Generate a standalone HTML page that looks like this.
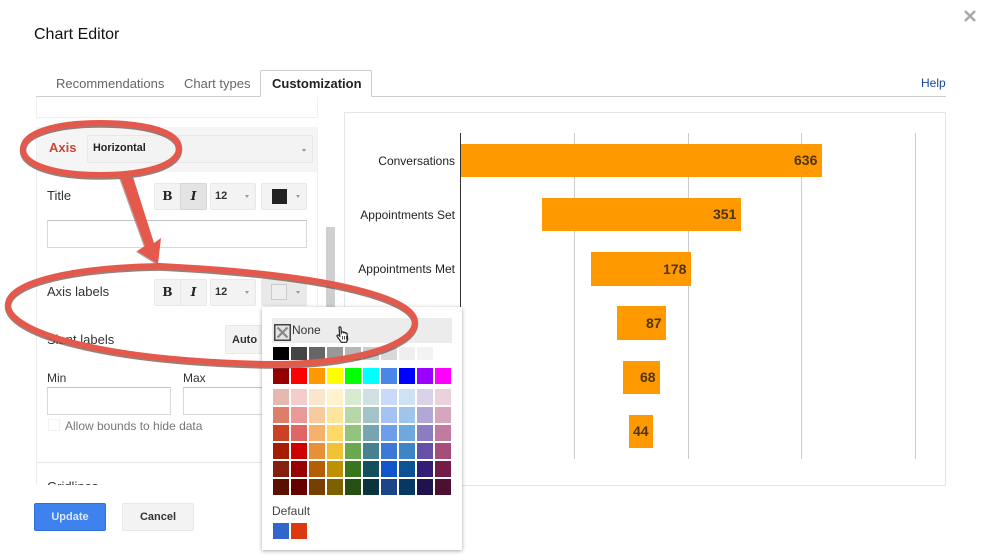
<!DOCTYPE html>
<html><head><meta charset="utf-8">
<style>
html,body{margin:0;padding:0;background:#fff}
body{width:987px;height:555px;position:relative;overflow:hidden;font-family:"Liberation Sans",sans-serif;color:#333;filter:blur(.35px)}
.a{position:absolute}
.t{position:absolute;white-space:nowrap;line-height:16px}
.btn{position:absolute;box-sizing:border-box;background:#f3f3f3;border:1px solid #e8e8e8;border-radius:2px;font-weight:bold;font-size:11px;color:#333;text-align:center}
.inp{position:absolute;box-sizing:border-box;background:#fff;border:1px solid #d8d8d8;border-top-color:#c4c4c4}
.caret{position:absolute;width:0;height:0;border-left:2.5px solid transparent;border-right:2.5px solid transparent;border-top:3px solid #999}
.bar{position:absolute;background:#ff9900}
.val{position:absolute;font-weight:bold;font-size:14px;color:#4e3410;line-height:16px;white-space:nowrap}
.gl{position:absolute;width:1px;top:133px;height:326px;background:#ccc}
.lb{position:absolute;right:532px;font-size:12px;color:#222;line-height:16px;white-space:nowrap}
.c{position:absolute;width:16px;height:16px}
.bi{font-family:"DejaVu Serif",serif;font-size:12px;line-height:25px;color:#222}
</style></head><body>

<div class="t" style="left:34px;top:26px;font-size:16px;color:#111;line-height:18px">Chart Editor</div>
<svg class="a" style="left:963px;top:9px" width="14" height="14"><path d="M2 2L12 12M12 2L2 12" stroke="#aaa" stroke-width="2.6"/></svg>

<!-- tabs -->
<div class="a" style="left:36px;top:96px;width:910px;height:1px;background:#ccc"></div>
<div class="t" style="left:56px;top:76px;font-size:13px;color:#666">Recommendations</div>
<div class="t" style="left:184px;top:76px;font-size:13px;color:#666">Chart types</div>
<div class="a" style="left:260px;top:70px;width:112px;height:27px;box-sizing:border-box;background:#fff;border:1px solid #ccc;border-bottom:1px solid #fff;border-radius:2px 2px 0 0"></div>
<div class="t" style="left:272px;top:76px;font-size:13px;font-weight:bold;color:#222">Customization</div>
<div class="t" style="left:921px;top:75px;font-size:12px;color:#15489c">Help</div>

<!-- left panel -->
<div class="a" style="left:36px;top:97px;width:282px;height:21px;border:1px solid #f0f0f0;border-top:0;box-sizing:border-box"></div>
<div class="a" style="left:36px;top:127px;width:1px;height:358px;background:#ededed"></div>
<div class="a" style="left:317px;top:127px;width:1px;height:358px;background:#f0f0f0"></div>
<div class="a" style="left:37px;top:127px;width:280px;height:45px;background:#f5f5f5"></div>
<div class="t" style="left:49px;top:140px;font-size:13px;font-weight:bold;color:#c9483a">Axis</div>
<div class="btn" style="left:87px;top:135px;width:226px;height:28px;text-align:left;padding:6px 0 0 5px;font-size:10.8px;color:#222">Horizontal</div>
<div class="caret" style="left:302px;top:149px"></div>

<div class="t" style="left:47px;top:188px;font-size:13px;color:#333">Title</div>
<div class="btn bi" style="left:154px;top:183px;width:27px;height:27px;border-radius:2px 0 0 2px">B</div>
<div class="btn bi" style="left:180px;top:183px;width:27px;height:27px;background:#e4e4e4;border-color:#d6d6d6;border-radius:0 2px 2px 0;font-style:italic">I</div>
<div class="btn" style="left:210px;top:183px;width:46px;height:27px;text-align:left;padding-left:4px;line-height:25px">12</div>
<div class="caret" style="left:245px;top:195px"></div>
<div class="btn" style="left:261px;top:183px;width:46px;height:27px"></div>
<div class="a" style="left:272px;top:189px;width:15px;height:15px;background:#222"></div>
<div class="caret" style="left:296px;top:195px"></div>
<div class="inp" style="left:47px;top:220px;width:260px;height:28px"></div>

<div class="a" style="left:326px;top:227px;width:9px;height:120px;background:#cfcfcf"></div>

<div class="t" style="left:47px;top:284px;font-size:13px;color:#333">Axis labels</div>
<div class="btn bi" style="left:154px;top:279px;width:27px;height:27px;border-radius:2px 0 0 2px">B</div>
<div class="btn bi" style="left:180px;top:279px;width:27px;height:27px;border-radius:0 2px 2px 0;font-style:italic">I</div>
<div class="btn" style="left:210px;top:279px;width:46px;height:27px;text-align:left;padding-left:4px;line-height:25px">12</div>
<div class="caret" style="left:245px;top:291px"></div>
<div class="btn" style="left:261px;top:279px;width:46px;height:27px;background:#e9e9e9"></div>
<div class="a" style="left:271px;top:284px;width:16px;height:16px;box-sizing:border-box;background:#eee;border:1px solid #ccc"></div>
<div class="caret" style="left:296px;top:291px"></div>

<div class="t" style="left:47px;top:332px;font-size:13px;color:#333">Slant labels</div>
<div class="btn" style="left:225px;top:325px;width:40px;height:29px;line-height:28px;text-align:left;padding-left:6px">Auto</div>

<div class="t" style="left:47px;top:370px;font-size:12px;color:#333">Min</div>
<div class="t" style="left:183px;top:370px;font-size:12px;color:#333">Max</div>
<div class="inp" style="left:47px;top:387px;width:124px;height:28px"></div>
<div class="inp" style="left:183px;top:387px;width:90px;height:28px"></div>
<div class="a" style="left:48px;top:419px;width:12px;height:12px;box-sizing:border-box;border:1px solid #f2f2f2"></div>
<div class="t" style="left:65px;top:418px;font-size:12px;color:#777">Allow bounds to hide data</div>
<div class="a" style="left:37px;top:462px;width:280px;height:1px;background:#e8e8e8"></div>
<div class="a" style="left:47px;top:479px;width:60px;height:6px;overflow:hidden"><div class="t" style="left:0;top:0;font-size:13px;color:#333">Gridlines</div></div>

<div class="a" style="left:34px;top:503px;width:72px;height:28px;box-sizing:border-box;background:#3d82ee;border:1px solid #2f6fd6;border-radius:2px;color:#dce8fb;font-size:11px;font-weight:bold;text-align:center;line-height:27px">Update</div>
<div class="btn" style="left:122px;top:503px;width:72px;height:28px;line-height:27px">Cancel</div>

<!-- chart -->
<div class="a" style="left:344px;top:112px;width:602px;height:374px;box-sizing:border-box;border:1px solid #e6e6e6"></div>
<div class="gl" style="left:574px"></div>
<div class="gl" style="left:688px"></div>
<div class="gl" style="left:801px"></div>
<div class="gl" style="left:915px"></div>
<div class="a" style="left:460px;top:133px;width:1px;height:326px;background:#333"></div>
<div class="lb" style="top:153px">Conversations</div>
<div class="lb" style="top:207px">Appointments Set</div>
<div class="lb" style="top:261px">Appointments Met</div>
<div class="bar" style="left:461px;top:144px;width:361px;height:33px"></div>
<div class="bar" style="left:542px;top:198px;width:199px;height:33px"></div>
<div class="bar" style="left:591px;top:252px;width:100px;height:34px"></div>
<div class="bar" style="left:617px;top:306px;width:49px;height:34px"></div>
<div class="bar" style="left:623px;top:361px;width:37px;height:33px"></div>
<div class="bar" style="left:629px;top:415px;width:24px;height:33px"></div>
<div class="val" style="left:794px;top:152px">636</div>
<div class="val" style="left:713px;top:206px">351</div>
<div class="val" style="left:663px;top:261px">178</div>
<div class="val" style="left:646px;top:315px">87</div>
<div class="val" style="left:640px;top:369px">68</div>
<div class="val" style="left:633px;top:423px">44</div>

<!-- popup -->
<div class="a" style="left:262px;top:307px;width:200px;height:243px;background:#fff;box-shadow:0 1px 4px rgba(0,0,0,.35)"></div>
<div class="a" style="left:272px;top:318px;width:180px;height:25px;background:#ececec"></div>
<svg class="a" style="left:274px;top:324px" width="17" height="17"><rect x=".75" y=".75" width="15.5" height="15.5" fill="#e4e4e4" stroke="#444" stroke-width="1.5"/><path d="M3.5 3.5L13.5 13.5M13.5 3.5L3.5 13.5" stroke="#888" stroke-width="2.2"/></svg>
<div class="t" style="left:292px;top:322px;font-size:12px;color:#333">None</div>
<svg class="a" style="left:335px;top:325px" width="16" height="20" viewBox="0 0 16 20"><path d="M4 2.2c.9-.8 1.900-.3 2 .8l.4 5 .5-.9c.7-.6 1.500-.2 1.700.5.600-.6 1.500-.3 1.700.5.700-.5 1.600-.2 1.700.7l.6 4.200c.1 1.500-.4 3.100-1.300 4.300H6.400L2.200 11.500c-.7-1 .5-2 1.400-1.300l1.200 1Z" fill="#fff" stroke="#222" stroke-width="1.200"/><path d="M7.500 11v3.500M9.500 11v3.500M11.500 11v3.500" stroke="#222" stroke-width=".8"/></svg>

<div id="pal">
<div class="c" style="left:273px;top:347px;height:13px;background:#000"></div>
<div class="c" style="left:291px;top:347px;height:13px;background:#444"></div>
<div class="c" style="left:309px;top:347px;height:13px;background:#666"></div>
<div class="c" style="left:327px;top:347px;height:13px;background:#999"></div>
<div class="c" style="left:345px;top:347px;height:13px;background:#b7b7b7"></div>
<div class="c" style="left:363px;top:347px;height:13px;background:#ccc"></div>
<div class="c" style="left:381px;top:347px;height:13px;background:#d9d9d9"></div>
<div class="c" style="left:399px;top:347px;height:13px;background:#efefef"></div>
<div class="c" style="left:417px;top:347px;height:13px;background:#f3f3f3"></div>

<div class="c" style="left:273px;top:368px;background:#980000"></div>
<div class="c" style="left:291px;top:368px;background:#f00"></div>
<div class="c" style="left:309px;top:368px;background:#f90"></div>
<div class="c" style="left:327px;top:368px;background:#ff0"></div>
<div class="c" style="left:345px;top:368px;background:#0f0"></div>
<div class="c" style="left:363px;top:368px;background:#0ff"></div>
<div class="c" style="left:381px;top:368px;background:#4a86e8"></div>
<div class="c" style="left:399px;top:368px;background:#00f"></div>
<div class="c" style="left:417px;top:368px;background:#90f"></div>
<div class="c" style="left:435px;top:368px;background:#f0f"></div>

<div class="c" style="left:273px;top:389px;background:#e6b8af"></div>
<div class="c" style="left:291px;top:389px;background:#f4cccc"></div>
<div class="c" style="left:309px;top:389px;background:#fce5cd"></div>
<div class="c" style="left:327px;top:389px;background:#fff2cc"></div>
<div class="c" style="left:345px;top:389px;background:#d9ead3"></div>
<div class="c" style="left:363px;top:389px;background:#d0e0e3"></div>
<div class="c" style="left:381px;top:389px;background:#c9daf8"></div>
<div class="c" style="left:399px;top:389px;background:#cfe2f3"></div>
<div class="c" style="left:417px;top:389px;background:#d9d2e9"></div>
<div class="c" style="left:435px;top:389px;background:#ead1dc"></div>

<div class="c" style="left:273px;top:407px;background:#dd7e6b"></div>
<div class="c" style="left:291px;top:407px;background:#ea9999"></div>
<div class="c" style="left:309px;top:407px;background:#f9cb9c"></div>
<div class="c" style="left:327px;top:407px;background:#ffe599"></div>
<div class="c" style="left:345px;top:407px;background:#b6d7a8"></div>
<div class="c" style="left:363px;top:407px;background:#a2c4c9"></div>
<div class="c" style="left:381px;top:407px;background:#a4c2f4"></div>
<div class="c" style="left:399px;top:407px;background:#9fc5e8"></div>
<div class="c" style="left:417px;top:407px;background:#b4a7d6"></div>
<div class="c" style="left:435px;top:407px;background:#d5a6bd"></div>

<div class="c" style="left:273px;top:425px;background:#cc4125"></div>
<div class="c" style="left:291px;top:425px;background:#e06666"></div>
<div class="c" style="left:309px;top:425px;background:#f6b26b"></div>
<div class="c" style="left:327px;top:425px;background:#ffd966"></div>
<div class="c" style="left:345px;top:425px;background:#93c47d"></div>
<div class="c" style="left:363px;top:425px;background:#76a5af"></div>
<div class="c" style="left:381px;top:425px;background:#6d9eeb"></div>
<div class="c" style="left:399px;top:425px;background:#6fa8dc"></div>
<div class="c" style="left:417px;top:425px;background:#8e7cc3"></div>
<div class="c" style="left:435px;top:425px;background:#c27ba0"></div>

<div class="c" style="left:273px;top:443px;background:#a61c00"></div>
<div class="c" style="left:291px;top:443px;background:#c00"></div>
<div class="c" style="left:309px;top:443px;background:#e69138"></div>
<div class="c" style="left:327px;top:443px;background:#f1c232"></div>
<div class="c" style="left:345px;top:443px;background:#6aa84f"></div>
<div class="c" style="left:363px;top:443px;background:#45818e"></div>
<div class="c" style="left:381px;top:443px;background:#3c78d8"></div>
<div class="c" style="left:399px;top:443px;background:#3d85c6"></div>
<div class="c" style="left:417px;top:443px;background:#674ea7"></div>
<div class="c" style="left:435px;top:443px;background:#a64d79"></div>

<div class="c" style="left:273px;top:461px;background:#85200c"></div>
<div class="c" style="left:291px;top:461px;background:#900"></div>
<div class="c" style="left:309px;top:461px;background:#b45f06"></div>
<div class="c" style="left:327px;top:461px;background:#bf9000"></div>
<div class="c" style="left:345px;top:461px;background:#38761d"></div>
<div class="c" style="left:363px;top:461px;background:#134f5c"></div>
<div class="c" style="left:381px;top:461px;background:#15c"></div>
<div class="c" style="left:399px;top:461px;background:#0b5394"></div>
<div class="c" style="left:417px;top:461px;background:#351c75"></div>
<div class="c" style="left:435px;top:461px;background:#741b47"></div>

<div class="c" style="left:273px;top:479px;background:#5b0f00"></div>
<div class="c" style="left:291px;top:479px;background:#600"></div>
<div class="c" style="left:309px;top:479px;background:#783f04"></div>
<div class="c" style="left:327px;top:479px;background:#7f6000"></div>
<div class="c" style="left:345px;top:479px;background:#274e13"></div>
<div class="c" style="left:363px;top:479px;background:#0c343d"></div>
<div class="c" style="left:381px;top:479px;background:#1c4587"></div>
<div class="c" style="left:399px;top:479px;background:#073763"></div>
<div class="c" style="left:417px;top:479px;background:#20124d"></div>
<div class="c" style="left:435px;top:479px;background:#4c1130"></div>
</div>
<div class="t" style="left:272px;top:503px;font-size:12px;color:#444">Default</div>
<div class="c" style="left:273px;top:523px;background:#3366cc"></div>
<div class="c" style="left:291px;top:523px;background:#dc3912"></div>

<!-- annotation -->
<svg class="a" style="left:0;top:0" width="987" height="555" viewBox="0 0 987 555">
<path d="M120 177L133 177L154 243L161 238L158 264L137 251L145 246Z" fill="#6b4a45" opacity=".5" transform="translate(-1,1)"/>
<g fill="none" stroke="#6b4a45" stroke-width="6.500" opacity=".7" transform="translate(0,1.500)">
<path d="M100 123C55 123 23 133 23 149C23 165 55 175 100 175C146 175 179 165 179 148C179 132 146 123 100 123Z"/>
<path d="M160 266C60 268 8 285 8 305C8 330 90 360 267 364C350 365 415 346 415 322C415 300 340 275 160 266Z"/>
</g>
<g fill="none" stroke="#e5594c" stroke-width="6">
<path d="M100 123C55 123 23 133 23 149C23 165 55 175 100 175C146 175 179 165 179 148C179 132 146 123 100 123Z"/>
<path d="M160 266C60 268 8 285 8 305C8 330 90 360 267 364C350 365 415 346 415 322C415 300 340 275 160 266Z"/>
</g>
<path d="M120 177L133 177L154 243L161 238L158 264L137 251L145 246Z" fill="#e5594c"/>
</svg>
</body></html>
